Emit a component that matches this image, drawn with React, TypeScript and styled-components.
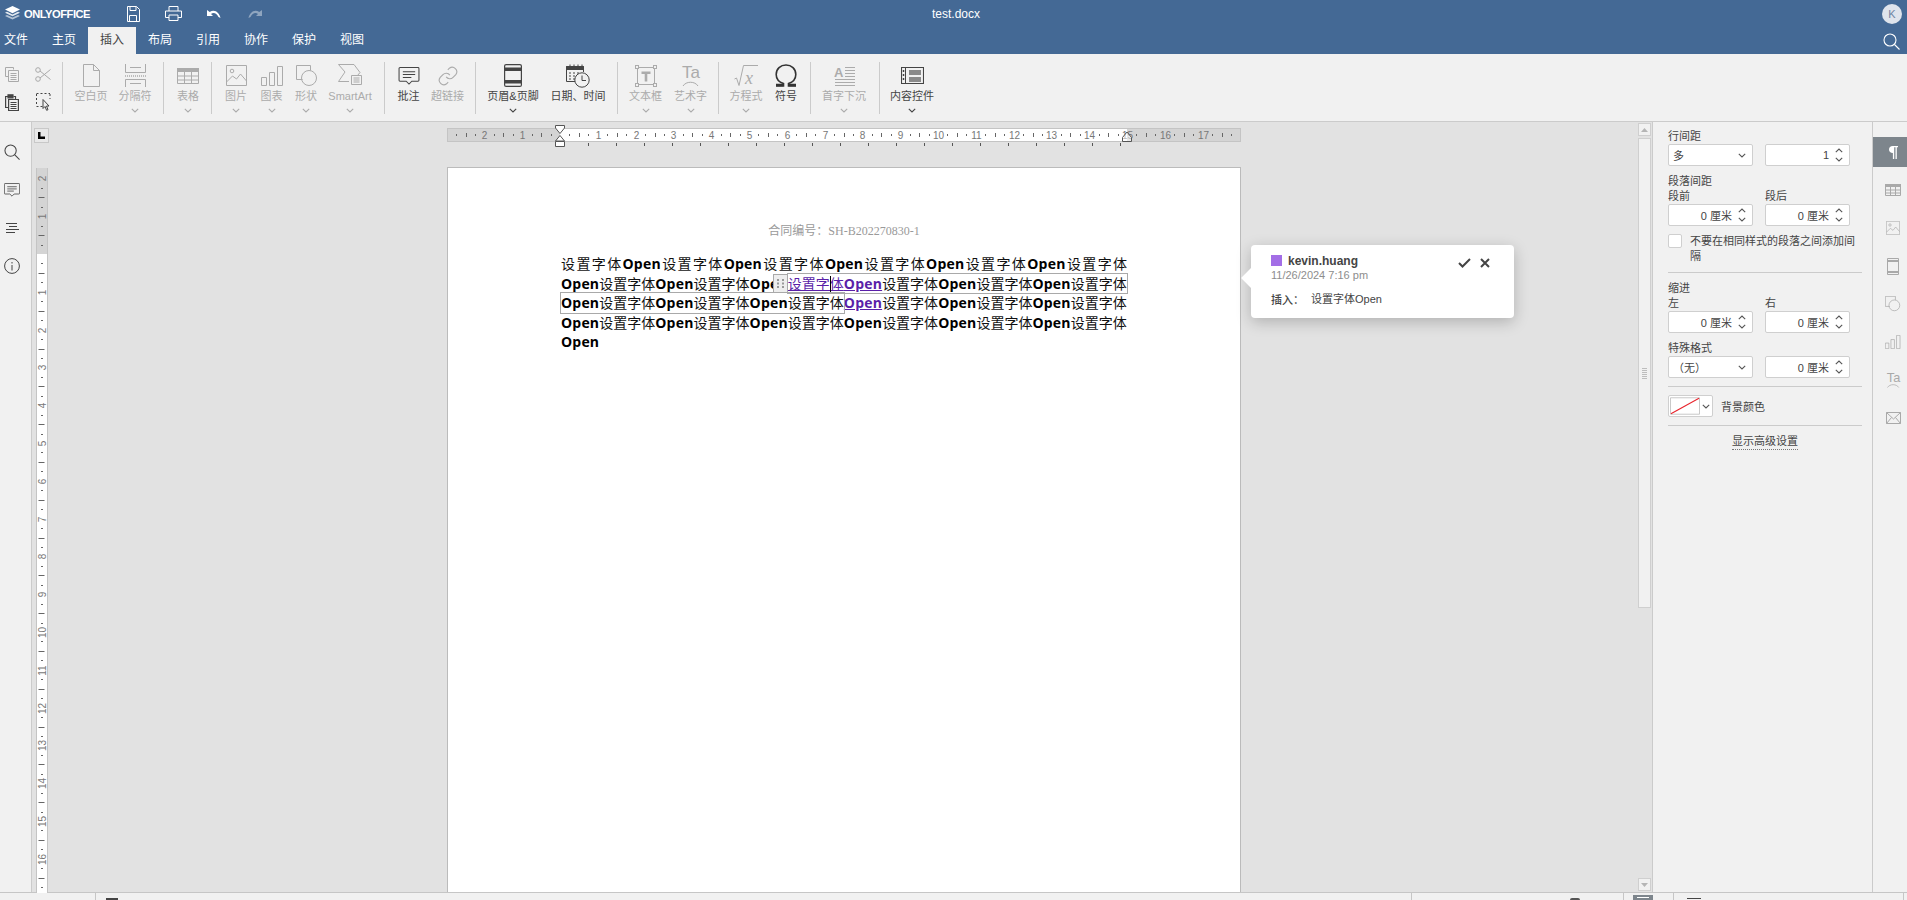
import React from 'react'
import styled, { createGlobalStyle } from 'styled-components'

const GlobalStyle = createGlobalStyle`
  html, body { margin: 0; padding: 0; height: 100%; overflow: hidden; }
  body { font-family: "Liberation Sans", "Noto Sans CJK SC", sans-serif; color: #444; background: #f1f1f1; }
  * { box-sizing: border-box; }
`

const Shell = styled.div`
  display: flex;
  flex-direction: column;
  width: 1907px;
  height: 900px;
  overflow: hidden;
`

/* header */
const Header = styled.header`
  background: #446995;
  color: #fff;
  height: 54px;
  flex: none;
`
const TitleRow = styled.div`
  display: grid;
  grid-template-columns: 1fr auto 1fr;
  align-items: center;
  height: 27px;
`
const LeftTools = styled.div`
  display: flex;
  align-items: center;
  padding-left: 4px;
`
const Logo = styled.div`
  display: flex;
  align-items: center;
  gap: 3px;
  width: 109px;
  font-size: 11.2px;
  font-weight: 700;
  letter-spacing: -0.5px;
`
const HeadIcon = styled.div<{ $dim?: boolean }>`
  width: 40.500px;
  display: flex;
  justify-content: center;
  opacity: ${p => (p.$dim ? 0.4 : 1)};
`
const DocTitle = styled.div`
  font-size: 12px;
  padding-left: 5px;
`
const RightTools = styled.div`
  display: flex;
  justify-content: flex-end;
  padding-right: 5px;
`
const Avatar = styled.div`
  width: 20px;
  height: 20px;
  border-radius: 50%;
  background: #dfe4ec;
  color: #6f84a3;
  font-size: 11px;
  display: flex;
  align-items: center;
  justify-content: center;
`
const TabRow = styled.div`
  display: flex;
  height: 27px;
  position: relative;
`
const Tab = styled.div<{ $active?: boolean }>`
  width: 48px;
  padding-left: 12px;
  font-size: 12px;
  line-height: 27px;
  background: ${p => (p.$active ? '#f1f1f1' : 'transparent')};
  color: ${p => (p.$active ? '#444' : '#fff')};
  &:first-child { width: 40px; padding-left: 4px; }
`
const TabSearch = styled.div`
  margin-left: auto;
  padding: 6px 7px 0 0;
`

/* toolbar */
const Toolbar = styled.div`
  display: flex;
  align-items: flex-start;
  flex: none;
  height: 68px;
  padding-top: 8px;
  background: #f1f1f1;
  border-bottom: 1px solid #cbcbcb;
`
const EditGrid = styled.div`
  display: grid;
  width: 62px;
  grid-template-columns: 24px 38px;
  grid-template-rows: 24px 24px;
  row-gap: 4px;
`
const SmallBtn = styled.div<{ $off?: boolean }>`
  display: flex;
  align-items: center;
  justify-content: center;
  color: ${p => (p.$off ? '#a9a9a9' : '#444')};
`
const Sep = styled.div`
  width: 1px;
  height: 52px;
  background: #cbcbcb;
  flex: none;
`
const Group = styled.div<{ $w: number; $pl: number }>`
  display: flex;
  flex: none;
  width: ${p => p.$w}px;
  padding-left: ${p => p.$pl}px;
`
const BigBtn = styled.div<{ $w: number; $off?: boolean }>`
  display: flex;
  flex-direction: column;
  align-items: center;
  flex: none;
  width: ${p => p.$w}px;
  color: ${p => (p.$off ? '#ababab' : '#444')};
`
const BigIcon = styled.div`
  height: 27px;
  display: flex;
  align-items: center;
  justify-content: center;
`
const BigLabel = styled.div`
  height: 14px;
  font-size: 11px;
  line-height: 14px;
  white-space: nowrap;
`
const BigChev = styled.div`
  height: 10px;
  margin-top: 2px;
  display: flex;
  align-items: center;
`

/* main */
const Main = styled.div`
  display: flex;
  flex: 1;
  min-height: 0;
`
const LeftRail = styled.aside`
  flex: none;
  width: 32px;
  padding-top: 11px;
  background: #f1f1f1;
  border-right: 1px solid #cbcbcb;
`
const RailBtn = styled.div`
  width: 24px;
  height: 38px;
  display: flex;
  align-items: center;
  justify-content: center;
  color: #444;
`
const Workspace = styled.div`
  flex: 1;
  min-width: 0;
  display: flex;
  flex-direction: column;
  position: relative;
  background: #e2e2e2;
`
const RulerRow = styled.div`
  display: flex;
  flex: none;
  height: 45px;
  padding: 6px 0 0 2px;
`
const TabBox = styled.div`
  flex: none;
  width: 15px;
  height: 15px;
  margin-right: 398px;
  border: 1px solid #c8c8c8;
  background: #e8e8e8;
  display: flex;
  align-items: center;
  justify-content: center;
`
const SheetRow = styled.div`
  display: flex;
  flex: 1;
  min-height: 0;
  padding-left: 4px;
`
const VRuler = styled.div`
  flex: none;
  width: 11px;
  margin-top: 1px;
  margin-right: 400px;
`
const Page = styled.div`
  flex: none;
  width: 794px;
  background: #fff;
  border: 1px solid #bbb;
  border-bottom: none;
  padding: 55px 0 0 113px;
  overflow: hidden;
`
const DocHeader = styled.div`
  width: 792px;
  margin: 0 0 15.4px -113px;
  height: 16px;
  line-height: 16px;
  text-align: center;
  font-size: 12px;
  color: #9a9a9a;
  font-family: "Liberation Serif", "Noto Sans CJK SC", serif;
`
const Line = styled.div<{ $justify?: boolean }>`
  width: 566px;
  height: 19.4px;
  line-height: 19.4px;
  font-size: 14px;
  color: #111;
  white-space: nowrap;
  font-family: "Noto Sans CJK SC", sans-serif;
  text-align: ${p => (p.$justify ? 'justify' : 'left')};
  text-align-last: ${p => (p.$justify ? 'justify' : 'left')};
  ${p => (p.$justify ? 'white-space: normal;' : '')}
`
const Latin = styled.span`
  font-family: "Open Sans", sans-serif;
  font-weight: 700;
  letter-spacing: 0.2px;
  color: #000;
`
const Inserted = styled.span`
  color: #5a1fa8;
  text-decoration: underline;
  & > span { color: #5a1fa8; }
`
const Control = styled.span`
  display: inline-block;
  position: relative;
  height: 19.4px;
  outline: 1px solid #a9a9a9;
  outline-offset: -0.5px;
  vertical-align: top;
`
const Handle = styled.span`
  position: absolute;
  left: -15px;
  top: 0;
  width: 15px;
  height: 100%;
  background: #eee;
  border: 1px solid #a9a9a9;
  display: flex;
  align-items: center;
  justify-content: center;
`
const Caret = styled.span`
  position: absolute;
  left: 42px;
  top: 2px;
  width: 1.500px;
  height: 17px;
  background: #000;
`
const ScrollBar = styled.div`
  flex: none;
  width: 14px;
  background: #e2e2e2;
  display: flex;
  flex-direction: column;
  padding: 1px 1px 1px 0;
  gap: 2px;
`
const ScrollBtn = styled.div`
  flex: none;
  height: 13px;
  background: #f1f1f1;
  border: 1px solid #cfcfcf;
  display: flex;
  align-items: center;
  justify-content: center;
`
const ScrollThumb = styled.div`
  height: 470px;
  flex: none;
  background: #f1f1f1;
  border: 1px solid #cfcfcf;
  display: flex;
  align-items: center;
  justify-content: center;
`
const ScrollTrack = styled.div`
  flex: 1;
`

/* comment popover */
const Popover = styled.div`
  position: absolute;
  left: 1219px;
  top: 123px;
  width: 263px;
  height: 73px;
  background: #fff;
  border-radius: 4px;
  box-shadow: 0 4px 15px rgba(0, 0, 0, 0.22);
  padding: 8px 20px;
  &::before {
    content: '';
    position: absolute;
    left: -7px;
    top: 26px;
    width: 14px;
    height: 14px;
    background: #fff;
    transform: rotate(45deg);
  }
`
const PopHead = styled.div`
  display: flex;
  align-items: center;
  position: relative;
  height: 15px;
`
const Swatch = styled.span`
  width: 11px;
  height: 11px;
  background: #a36ee6;
  margin-right: 6px;
`
const PopName = styled.span`
  font-size: 12px;
  font-weight: 700;
  color: #444;
`
const PopActions = styled.div`
  margin-left: auto;
  display: flex;
  align-items: center;
  gap: 9px;
  padding: 5px 4px 0 0;
`
const PopDate = styled.div`
  font-size: 11px;
  line-height: 15px;
  color: #8d8d8d;
`
const PopBody = styled.div`
  display: flex;
  margin-top: 9px;
  font-size: 11px;
  line-height: 15px;
  color: #444;
`
const PopType = styled.span`
  font-weight: 500;
  width: 40px;
  font-family: "Noto Sans CJK SC", sans-serif;
`

/* settings panel */
const Panel = styled.aside`
  flex: none;
  width: 221px;
  padding: 7px 10px 0 15px;
  background: #f1f1f1;
  border-left: 1px solid #cbcbcb;
  border-right: 1px solid #cbcbcb;
  font-size: 11px;
`
const Caption = styled.div<{ $mt?: number }>`
  height: 14px;
  line-height: 14px;
  margin-top: ${p => p.$mt ?? 0}px;
  margin-bottom: 1px;
  white-space: nowrap;
`
const Pair = styled.div`
  display: grid;
  grid-template-columns: 85px 85px;
  column-gap: 12px;
`
const Field = styled.div`
  height: 22px;
  display: flex;
  align-items: center;
  background: #fff;
  border: 1px solid #cfcfcf;
  border-radius: 2px;
`
const FieldValue = styled.div<{ $left?: boolean }>`
  flex: 1;
  text-align: ${p => (p.$left ? 'left' : 'right')};
  padding-left: ${p => (p.$left ? '4px' : '0')};
  white-space: nowrap;
`
const Spin = styled.div`
  flex: none;
  width: 20px;
  display: flex;
  flex-direction: column;
  align-items: center;
  gap: 4px;
`
const SelectArrow = styled.div<{ $w?: number }>`
  flex: none;
  width: ${p => p.$w ?? 20}px;
  display: flex;
  justify-content: center;
`
const CheckRow = styled.div`
  display: flex;
  margin-top: 8px;
`
const CheckBox = styled.div`
  flex: none;
  width: 14px;
  height: 14px;
  margin-right: 8px;
  background: #fff;
  border: 1px solid #cfcfcf;
  border-radius: 2px;
`
const CheckText = styled.div`
  width: 172px;
  line-height: 15px;
`
const Rule = styled.div`
  height: 1px;
  margin-top: 8px;
  background: #cbcbcb;
`
const ColorRow = styled.div`
  display: flex;
  align-items: center;
  margin-top: 8px;
`
const ColorBtn = styled.div`
  width: 45px;
  height: 22px;
  margin-right: 8px;
  display: flex;
  align-items: center;
  background: #fff;
  border: 1px solid #cfcfcf;
  border-radius: 2px;
  padding-left: 1px;
`
const AdvLink = styled.div`
  width: max-content;
  margin: 8px auto 0;
  height: 16px;
  line-height: 14px;
  border-bottom: 1px dotted #777;
`
const RightRail = styled.aside`
  flex: none;
  width: 34px;
  padding-top: 15px;
  background: #f1f1f1;
`
const RightBtn = styled.div<{ $active?: boolean }>`
  height: 30px;
  margin-bottom: 8px;
  padding-left: 6px;
  display: flex;
  align-items: center;
  justify-content: center;
  background: ${p => (p.$active ? '#7d858c' : 'transparent')};
  color: ${p => (p.$active ? '#fff' : '#a9a9a9')};
`

/* status bar */
const StatusBar = styled.footer`
  flex: none;
  height: 8px;
  display: flex;
  background: #f1f1f1;
  border-top: 1px solid #c6c6c6;
  overflow: hidden;
`
const StatusCell = styled.div<{ $w: number }>`
  flex: none;
  position: relative;
  width: ${p => p.$w}px;
  border-right: 1px solid #c6c6c6;
`
const StatusMark = styled.div<{ $l: number; $w: number; $t: number; $h: number; $bg: string; $r?: number }>`
  position: absolute;
  left: ${p => p.$l}px;
  top: ${p => p.$t}px;
  width: ${p => p.$w}px;
  height: ${p => p.$h}px;
  background: ${p => p.$bg};
  border-radius: ${p => p.$r ?? 0}px;
`

/* icons */
const Chev = ({ up, c = 'currentColor' }: { up?: boolean; c?: string }) => (
  <svg width="8" height="5" viewBox="0 0 8 5" fill="none" stroke={c} strokeWidth="1.100">
    <path d={up ? 'M.8 4.200 4 1l3.200 3.200' : 'M.8 .8 4 4l3.200-3.200'} />
  </svg>
)
const S = ({ w, h, children }: { w: number; h: number; children: React.ReactNode }) => (
  <svg width={w} height={h} viewBox={`0 0 ${w} ${h}`} fill="none" stroke="currentColor" strokeWidth="1">
    {children}
  </svg>
)
const StackLogo = () => (
  <svg width="17" height="17" viewBox="0 0 17 17" fill="#fff">
    <path d="M8.500 1 16 4.600 8.500 8.200 1 4.600z" />
    <path opacity=".85" d="M3 6.800 8.500 9.400 14 6.800l2 1-7.500 3.500L1 7.800z" />
    <path opacity=".6" d="M3 10l5.500 2.600L14 10l2 1-7.500 3.600L1 11z" />
  </svg>
)
const Save = () => (
  <S w={14} h={16}>
    <path d="M1.500 .5h9l3 3v12h-12z" />
    <path d="M4 .5v4h6v-4M3.500 15.500V9.500h7v6" />
  </S>
)
const Print = () => (
  <S w={17} h={15}>
    <path d="M4 5V.5h9V5M4 11.500H.5V5h16v6.500H13" />
    <path d="M4 9h9v5.500H4z" />
  </S>
)
const Undo = ({ flip }: { flip?: boolean }) => (
  <svg width="14" height="10" viewBox="0 0 14 10" fill="#fff" style={flip ? { transform: 'scaleX(-1)' } : undefined}>
    <path d="M0 1v6h6L4 5c2-1.800 5.500-1.500 7.500 3l2 1C12.500 3.500 7.500-.5 2.700 3z" />
  </svg>
)
const Search = ({ s = 17 }: { s?: number }) => (
  <svg width={s} height={s} viewBox="0 0 17 17" fill="none" stroke="currentColor" strokeWidth="1.100">
    <circle cx="7" cy="7" r="6" />
    <path d="m11.500 11.500 5 5" />
  </svg>
)
const Copy = () => (
  <S w={14} h={15}>
    <path d="M.5.5h8v2M.5.5v9h3" />
    <path d="M3.500 3.500h10v11h-10zM5.500 6.500h6M5.500 8.500h6M5.500 10.500h6M5.500 12.500h6" />
  </S>
)
const Cut = () => (
  <S w={16} h={15}>
    <circle cx="3" cy="3" r="2.300" />
    <circle cx="3" cy="12" r="2.300" />
    <path d="M5 4 15.500 12.500M5 11 15.500 2.500" />
  </S>
)
const Paste = () => (
  <svg width="14" height="17" viewBox="0 0 14 17" fill="none" stroke="currentColor" strokeWidth="1.200">
    <path d="M3 2.500H.6v11h2.500" />
    <path d="M8.500 2.500h2v2.500" />
    <path d="M3 .8h5v3H3z" fill="currentColor" />
    <path d="M3.600 5.500h9.800v11H3.600zM5.500 8.500h6M5.500 10.500h6M5.500 12.500h6M5.500 14.500h6" />
  </svg>
)
const SelectAll = () => (
  <svg width="15" height="18" viewBox="0 0 15 18" fill="none" stroke="currentColor" strokeWidth="1">
    <path d="M.5 1v12M14 1v5M.5.500h13.500M.5 13.500h6" strokeDasharray="2 2" />
    <path d="M7 6.500v9l2-2 1.600 3.800 1.400-.6L10.500 13H13z" fill="#f1f1f1" />
  </svg>
)
const Blank = () => (
  <S w={17} h={23}>
    <path d="M.5.5h10l6 6v16H.5zM10.500.5v6h6" />
  </S>
)
const Breaks = () => (
  <S w={21} h={23}>
    <path d="M.5 0v8.500h20V0M5 3.500h11" />
    <path d="M0 12h21" strokeDasharray="1 1" strokeWidth="1.500" />
    <path d="M.5 23v-7.500h20V23M5 19.500h11" />
  </S>
)
const TableIco = () => (
  <svg width="22" height="16" viewBox="0 0 22 16" fill="none" stroke="currentColor">
    <path d="M0 0h22v4H0z" fill="currentColor" stroke="none" />
    <path d="M.5.500h21v15H.5zM.5 8h21M.5 12h21M7.500 4v12M14.500 4v12" />
  </svg>
)
const Picture = ({ s = 21 }: { s?: number }) => (
  <svg width={s} height={s} viewBox="0 0 21 21" fill="none" stroke="currentColor">
    <path d="M.5.500h20v20H.5z" />
    <circle cx="6" cy="6" r="1.800" />
    <path d="m.5 17 6-6 4 3 4-5 6 7" />
  </svg>
)
const Chart = ({ sc = 1 }: { sc?: number }) => (
  <svg width={22 * sc} height={20 * sc} viewBox="0 0 22 20" fill="none" stroke="currentColor">
    <path d="M.5 11.500h5v8h-5zM8.500 6.500h5v13h-5zM16.500.5h5v19h-5z" />
  </svg>
)
const Shape = ({ sc = 1 }: { sc?: number }) => (
  <svg width={21 * sc} height={21 * sc} viewBox="0 0 21 21" fill="none" stroke="currentColor">
    <path d="M6.500 14.500H.5V.5h14v5" />
    <circle cx="13" cy="13" r="7.500" />
  </svg>
)
const SmartArt = () => (
  <S w={24} h={23}>
    <path d="M11 .5H.5L7 8 .5 17.500H11" />
    <path d="M11 .5h5l6 8-2.500 3" />
    <path d="M13.500 11.500h10v9h-10zM15.500 14h6M15.500 16h6M15.500 18h6" />
  </S>
)
const CommentIco = ({ w = 22, h = 18 }: { w?: number; h?: number }) => (
  <svg width={w} height={h} viewBox="0 0 22 19" fill="none" stroke="currentColor" strokeWidth="1.100">
    <path d="M1.500.6h19a1 1 0 0 1 1 1V14a1 1 0 0 1-1 1H14l-3 3-3-3H1.500a1 1 0 0 1-1-1V1.600a1 1 0 0 1 1-1z" />
    <path d="M4.500 5h13M4.500 8h13M4.500 11h9" />
  </svg>
)
const Link = () => (
  <svg width="22" height="22" viewBox="0 0 24 24" fill="none" stroke="currentColor" strokeWidth="1.200">
    <path d="M10 13a5 5 0 0 0 7.500.5l3-3a5 5 0 0 0-7-7l-1.700 1.700" />
    <path d="M14 11a5 5 0 0 0-7.500-.5l-3 3a5 5 0 0 0 7 7l1.700-1.700" />
  </svg>
)
const HeaderFooter = () => (
  <svg width="18" height="23" viewBox="0 0 18 23" fill="none" stroke="currentColor">
    <rect x=".6" y=".6" width="16.800" height="21.800" rx="1.500" strokeWidth="1.200" />
    <path d="M1 3.500h16V7H1zM1 16h16v3.500H1z" fill="currentColor" stroke="none" />
  </svg>
)
const DateIco = () => (
  <svg width="24" height="24" viewBox="0 0 24 24" fill="none" stroke="currentColor">
    <path d="M9 17.500H.5v-15h17V8" />
    <path d="M.5 2.500h17v3H.5z" fill="currentColor" />
    <path d="M4 .5v3M8 .5v3M12 .5v3M16 .5v3M3 9h2M7 9h2M11 9h2M3 12h2M7 12h2M3 15h2M7 15h2" />
    <circle cx="16" cy="16" r="7.200" fill="#f1f1f1" />
    <path d="M16 11.500V16.500h4" />
  </svg>
)
const TextBox = () => (
  <svg width="22" height="22" viewBox="0 0 22 22" fill="none" stroke="currentColor">
    <path d="M2.500 2.500h17v17h-17z" />
    <rect x=".5" y=".5" width="3" height="3" fill="#f1f1f1" />
    <rect x="18.500" y=".5" width="3" height="3" fill="#f1f1f1" />
    <rect x=".5" y="18.500" width="3" height="3" fill="#f1f1f1" />
    <rect x="18.500" y="18.500" width="3" height="3" fill="#f1f1f1" />
    <path d="M6.500 6.500h9v2.500h-3.200v7.500h-2.600V9H6.500z" fill="currentColor" stroke="none" />
  </svg>
)
const ArtText = ({ sc = 1 }: { sc?: number }) => (
  <svg width={20 * sc} height={23 * sc} viewBox="0 0 20 23" fill="none" stroke="currentColor">
    <text x="1" y="14" fontSize="17" fill="currentColor" stroke="none" fontFamily="Liberation Sans">Ta</text>
    <path d="M2 22c3-5 12-5 15 0" />
  </svg>
)
const Equation = () => (
  <svg width="24" height="22" viewBox="0 0 24 22" fill="none" stroke="currentColor">
    <path d="M.5 14l2-1 2.500 7.500L9.500.5H24" />
    <text x="11" y="19" fontSize="18" fontStyle="italic" fontFamily="Liberation Serif" fill="currentColor" stroke="none">x</text>
  </svg>
)
const Omega = () => (
  <svg width="22" height="23" viewBox="0 0 22 23" fill="none" stroke="#333">
    <path d="M1 22h7.500v-2.500C4 18 1.200 14.500 1.200 10.500 1.200 5 5.500 1 11 1s9.800 4 9.800 9.500c0 4-2.800 7.500-7.300 9V22H21" strokeWidth="1.600" />
    <path d="M1 21h7M14 21h7" strokeWidth="2.600" />
  </svg>
)
const DropCap = () => (
  <svg width="21" height="20" viewBox="0 0 21 20" fill="none" stroke="currentColor">
    <text x="0" y="11" fontSize="13" fontWeight="700" fill="currentColor" stroke="none" fontFamily="Liberation Sans">A</text>
    <path d="M11 1.500h10M11 4.500h10M11 7.500h10M11 10.500h10M1 13.500h20M1 16.500h20M1 19.500h20" />
  </svg>
)
const ContentCtl = () => (
  <svg width="23" height="19" viewBox="0 0 23 19" fill="none" stroke="currentColor">
    <path d="M.5 1.500h22v16H.5z" strokeWidth="1.100" />
    <path d="M4.500 1.500v16" />
    <path d="M2.500 4v2M2.500 8v2M2.500 12v2" strokeWidth="1.500" />
    <path d="M8 4h12v5H8zM8 11h12v5H8z" fill="#8a8a8a" stroke="none" />
  </svg>
)
const Nav = () => (
  <S w={13} h={10}>
    <path d="M0 .5h11M3 3.500h8M0 6.500h13M0 9.500h9" />
  </S>
)
const Info = () => (
  <svg width="16" height="16" viewBox="0 0 16 16" fill="none" stroke="currentColor">
    <circle cx="8" cy="8" r="7.400" />
    <path d="M8 4v1.500M8 7v5.500" />
  </svg>
)
const RightHF = () => (
  <svg width="12" height="17" viewBox="0 0 12 17" fill="none" stroke="currentColor">
    <path d="M.5.500h11v16H.5z" />
    <path d="M1 2h10v2H1zM1 13h10v2H1z" fill="currentColor" stroke="none" />
  </svg>
)
const Mail = () => (
  <svg width="15" height="12" viewBox="0 0 15 12" fill="none" stroke="currentColor">
    <path d="M.5.500h14v11H.5zM.5.500 7.500 7l7-6.500M.5 11.500 5.500 5.500M14.500 11.500l-5-6" />
  </svg>
)
const RightTable = () => (
  <svg width="16" height="12" viewBox="0 0 16 12" fill="none" stroke="currentColor">
    <path d="M.5.500h15v11H.5z" />
    <path d="M0 0h16v3H0z" fill="currentColor" stroke="none" />
    <path d="M.5 6h15M.5 9h15M5.500 3v9M10.500 3v9" />
  </svg>
)
const Pilcrow = () => (
  <svg width="9" height="13" viewBox="0 0 9 13" fill="currentColor">
    <path d="M3.500 0H9v1.300H7.800V13H6.500V1.300H5.200V13H3.900V7C1.500 7 0 5.500 0 3.500S1.500 0 3.500 0z" />
  </svg>
)
const Grip = () => (
  <svg width="7" height="9" viewBox="0 0 7 9" fill="#999">
    {[0, 3.5, 7].map(y => [0, 5].map(x => <rect key={`${x}-${y}`} x={x} y={y} width="2" height="2" />))}
  </svg>
)
const ScrollArrow = ({ up }: { up?: boolean }) => (
  <svg width="7" height="4" viewBox="0 0 7 4" fill="#b5b5b5">
    <path d={up ? 'M3.500 0 7 4H0z' : 'M0 0h7L3.500 4z'} />
  </svg>
)
const ThumbGrip = () => (
  <svg width="5" height="11" viewBox="0 0 5 11" fill="#bdbdbd">
    {[0, 2, 4, 6, 8, 10].map(y => <rect key={y} y={y} width="5" height="1" />)}
  </svg>
)
const NoFill = () => (
  <svg width="31" height="18" viewBox="0 0 31 18" fill="#fff" stroke="#c6c6c6">
    <path d="M.5.500h30v17H.5z" />
    <path d="M1 17 30 1" stroke="#e8242c" strokeWidth="1.100" />
  </svg>
)
const Check = () => (
  <svg width="13" height="10" viewBox="0 0 13 10" fill="none" stroke="#444" strokeWidth="2">
    <path d="m1 5 3.500 3.500L12 1" />
  </svg>
)
const Close = () => (
  <svg width="10" height="10" viewBox="0 0 10 10" fill="none" stroke="#444" strokeWidth="2">
    <path d="m1 1 8 8M9 1 1 9" />
  </svg>
)

/* rulers are measuring drawings, so ticks and digits live in svg */
const CM = 37.8
const ticks = (from: number, to: number) => {
  const out: number[] = []
  for (let i = Math.ceil(from * 4); i <= to * 4; i++) out.push(i)
  return out
}

const HorizontalRuler = () => (
  <svg width="794" height="20" viewBox="0 0 794 20" style={{ overflow: 'visible', display: 'block', flex: 'none' }}>
    <rect x=".5" y=".5" width="793" height="13" fill="#d4d4d4" stroke="#c4c4c4" />
    <rect x="113" y="1" width="567" height="12" fill="#fff" />
    {ticks(-2.9, 17.9).map(i => {
      const x = Math.round(113 + (i / 4) * CM) + 0.5
      if (i === 0) return null
      if (i % 4 === 0) {
        return (
          <text key={i} x={x} y="11" textAnchor="middle" fontSize="10" fill="#777" fontFamily="Liberation Sans">
            {Math.abs(i / 4)}
          </text>
        )
      }
      const long = Math.abs(i % 4) === 2
      return <line key={i} x1={x} x2={x} y1={long ? 5 : 6} y2={long ? 9 : 8} stroke="#666" />
    })}
    {Array.from({ length: 20 }, (_, i) => {
      const x = 113 + 28 * (i + 1) + 0.5
      return <line key={i} x1={x} x2={x} y1="15" y2="18" stroke="#555" />
    })}
    <path d="M108.500-2.500h9v2.500l-4.500 5.500-4.500-5.500zM108.500 13l4.500-5.500 4.500 5.500zM108.500 13.500h9v5h-9z" fill="#fff" stroke="#555" />
    <path d="M675.500 13.500v-4l4.500-5.500 4.500 5.500v4z" fill="#fff" fillOpacity=".5" stroke="#555" />
  </svg>
)

const VerticalRuler = () => (
  <svg width="12" height="725" viewBox="0 0 12 725" style={{ display: 'block' }}>
    <rect x=".5" y="0" width="11" height="725" fill="#fff" />
    <rect x=".5" y="0" width="11" height="86" fill="#d4d4d4" />
    <path d="M.5 0v725M11.500 0v725" stroke="#c4c4c4" />
    {ticks(-2, 16.9).map(i => {
      const y = Math.round(86 + (i / 4) * CM) + 0.5
      if (i === 0) return null
      if (i % 4 === 0) {
        return (
          <text
            key={i}
            x="6"
            y={y}
            transform={`rotate(-90 6 ${y})`}
            dy="3.500"
            textAnchor="middle"
            fontSize="10"
            fill="#777"
            fontFamily="Liberation Sans"
          >
            {Math.abs(i / 4)}
          </text>
        )
      }
      const long = Math.abs(i % 4) === 2
      return <line key={i} x1={long ? 2.5 : 5} x2={long ? 8.5 : 7} y1={y} y2={y} stroke="#666" />
    })}
  </svg>
)

const Unit = ({ value = '0 厘米' }: { value?: string }) => (
  <Field>
    <FieldValue>{value}</FieldValue>
    <Spin>
      <Chev up c="#555" />
      <Chev c="#555" />
    </Spin>
  </Field>
)

const Select = ({ value }: { value: string }) => (
  <Field>
    <FieldValue $left>{value}</FieldValue>
    <SelectArrow>
      <Chev c="#555" />
    </SelectArrow>
  </Field>
)

const Big = ({ w, label, off, menu, children }: { w: number; label: string; off?: boolean; menu?: boolean; children: React.ReactNode }) => (
  <BigBtn $w={w} $off={off}>
    <BigIcon>{children}</BigIcon>
    <BigLabel>{label}</BigLabel>
    {menu && (
      <BigChev>
        <Chev />
      </BigChev>
    )}
  </BigBtn>
)

const tabs = ['文件', '主页', '插入', '布局', '引用', '协作', '保护', '视图']
const CJK = '设置字体'

export default function App() {
  return (
    <Shell>
      <GlobalStyle />
      <Header>
        <TitleRow>
          <LeftTools>
            <Logo>
              <StackLogo />
              ONLYOFFICE
            </Logo>
            <HeadIcon><Save /></HeadIcon>
            <HeadIcon><Print /></HeadIcon>
            <HeadIcon><Undo /></HeadIcon>
            <HeadIcon $dim><Undo flip /></HeadIcon>
          </LeftTools>
          <DocTitle>test.docx</DocTitle>
          <RightTools>
            <Avatar>K</Avatar>
          </RightTools>
        </TitleRow>
        <TabRow>
          {tabs.map(t => (
            <Tab key={t} $active={t === '插入'}>{t}</Tab>
          ))}
          <TabSearch><Search /></TabSearch>
        </TabRow>
      </Header>

      <Toolbar>
        <EditGrid>
          <SmallBtn $off><Copy /></SmallBtn>
          <SmallBtn $off><Cut /></SmallBtn>
          <SmallBtn><Paste /></SmallBtn>
          <SmallBtn><SelectAll /></SmallBtn>
        </EditGrid>
        <Sep />
        <Group $w={100} $pl={6}>
          <Big w={44} label="空白页" off><Blank /></Big>
          <Big w={44} label="分隔符" off menu><Breaks /></Big>
        </Group>
        <Sep />
        <Group $w={47} $pl={5}>
          <Big w={38} label="表格" off menu><TableIco /></Big>
        </Group>
        <Sep />
        <Group $w={172} $pl={5}>
          <Big w={38} label="图片" off menu><Picture /></Big>
          <Big w={33} label="图表" off menu><Chart /></Big>
          <Big w={36} label="形状" off menu><Shape /></Big>
          <Big w={52} label="SmartArt" off menu><SmartArt /></Big>
        </Group>
        <Sep />
        <Group $w={90} $pl={4}>
          <Big w={39} label="批注"><CommentIco /></Big>
          <Big w={39} label="超链接" off><Link /></Big>
        </Group>
        <Sep />
        <Group $w={141} $pl={5}>
          <Big w={64} label="页眉&页脚" menu><HeaderFooter /></Big>
          <Big w={66} label="日期、时间"><DateIco /></Big>
        </Group>
        <Sep />
        <Group $w={100} $pl={5}>
          <Big w={45} label="文本框" off menu><TextBox /></Big>
          <Big w={45} label="艺术字" off menu><ArtText /></Big>
        </Group>
        <Sep />
        <Group $w={91} $pl={5}>
          <Big w={44} label="方程式" off menu><Equation /></Big>
          <Big w={36} label="符号"><Omega /></Big>
        </Group>
        <Sep />
        <Group $w={68} $pl={5}>
          <Big w={56} label="首字下沉" off menu><DropCap /></Big>
        </Group>
        <Sep />
        <Group $w={70} $pl={3}>
          <Big w={58} label="内容控件" menu><ContentCtl /></Big>
        </Group>
      </Toolbar>

      <Main>
        <LeftRail>
          <RailBtn><Search s={16} /></RailBtn>
          <RailBtn><CommentIco w={16} h={14} /></RailBtn>
          <RailBtn><Nav /></RailBtn>
          <RailBtn><Info /></RailBtn>
        </LeftRail>

        <Workspace>
          <RulerRow>
            <TabBox>
              <svg width="7" height="7" viewBox="0 0 7 7" fill="#000"><path d="M0 0h2.500v4.500H7V7H0z" /></svg>
            </TabBox>
            <HorizontalRuler />
          </RulerRow>
          <SheetRow>
            <VRuler><VerticalRuler /></VRuler>
            <Page>
              <DocHeader>合同编号：SH-B202270830-1</DocHeader>
              <Line $justify>
                设置字体<Latin>Open</Latin>设置字体<Latin>Open</Latin>设置字体<Latin>Open</Latin>设置字体<Latin>Open</Latin>设置字体<Latin>Open</Latin>设置字体
              </Line>
              <Line>
                <Latin>Open</Latin>{CJK}<Latin>Open</Latin>{CJK}<Latin>Open</Latin>
                <Control>
                  <Handle><Grip /></Handle>
                  <Inserted>{CJK}<Latin>Open</Latin></Inserted>
                  <Caret />
                  {CJK}<Latin>Open</Latin>{CJK}<Latin>Open</Latin>{CJK}
                </Control>
              </Line>
              <Line>
                <Control>
                  <Latin>Open</Latin>{CJK}<Latin>Open</Latin>{CJK}<Latin>Open</Latin>{CJK}
                </Control>
                <Inserted><Latin>Open</Latin></Inserted>
                {CJK}<Latin>Open</Latin>{CJK}<Latin>Open</Latin>{CJK}
              </Line>
              <Line>
                <Latin>Open</Latin>{CJK}<Latin>Open</Latin>{CJK}<Latin>Open</Latin>{CJK}<Latin>Open</Latin>{CJK}<Latin>Open</Latin>{CJK}<Latin>Open</Latin>{CJK}
              </Line>
              <Line><Latin>Open</Latin></Line>
            </Page>
          </SheetRow>
          <Popover>
            <PopHead>
              <Swatch />
              <PopName>kevin.huang</PopName>
              <PopActions><Check /><Close /></PopActions>
            </PopHead>
            <PopDate>11/26/2024 7:16 pm</PopDate>
            <PopBody>
              <PopType>插入：</PopType>
              <span>设置字体Open</span>
            </PopBody>
          </Popover>
        </Workspace>

        <ScrollBar>
          <ScrollBtn><ScrollArrow up /></ScrollBtn>
          <ScrollThumb><ThumbGrip /></ScrollThumb>
          <ScrollTrack />
          <ScrollBtn><ScrollArrow /></ScrollBtn>
        </ScrollBar>

        <Panel>
          <Caption>行间距</Caption>
          <Pair>
            <Select value="多" />
            <Unit value="1" />
          </Pair>
          <Caption $mt={8}>段落间距</Caption>
          <Pair>
            <Caption>段前</Caption>
            <Caption>段后</Caption>
            <Unit />
            <Unit />
          </Pair>
          <CheckRow>
            <CheckBox />
            <CheckText>不要在相同样式的段落之间添加间隔</CheckText>
          </CheckRow>
          <Rule />
          <Caption $mt={8}>缩进</Caption>
          <Pair>
            <Caption>左</Caption>
            <Caption>右</Caption>
            <Unit />
            <Unit />
          </Pair>
          <Caption $mt={8}>特殊格式</Caption>
          <Pair>
            <Select value="  （无）" />
            <Unit />
          </Pair>
          <Rule />
          <ColorRow>
            <ColorBtn>
              <NoFill />
              <SelectArrow $w={12}><Chev c="#555" /></SelectArrow>
            </ColorBtn>
            背景颜色
          </ColorRow>
          <Rule />
          <AdvLink>显示高级设置</AdvLink>
        </Panel>

        <RightRail>
          <RightBtn $active><Pilcrow /></RightBtn>
          <RightBtn><RightTable /></RightBtn>
          <RightBtn><Picture s={14} /></RightBtn>
          <RightBtn><RightHF /></RightBtn>
          <RightBtn><Shape sc={0.72} /></RightBtn>
          <RightBtn><Chart sc={0.7} /></RightBtn>
          <RightBtn><ArtText sc={0.75} /></RightBtn>
          <RightBtn><Mail /></RightBtn>
        </RightRail>
      </Main>

      <StatusBar>
        <StatusCell $w={96} />
        <StatusCell $w={1316}>
          <StatusMark $l={10} $w={12} $t={5} $h={2} $bg="#444" />
        </StatusCell>
        <StatusCell $w={212}>
          <StatusMark $l={158} $w={10} $t={5} $h={4} $bg="#555" $r={4} />
        </StatusCell>
        <StatusCell $w={50}>
          <StatusMark $l={9} $w={20} $t={2} $h={6} $bg="#7d858c" />
          <StatusMark $l={13} $w={12} $t={4} $h={1} $bg="#fff" />
        </StatusCell>
        <StatusCell $w={230}>
          <StatusMark $l={13} $w={14} $t={5} $h={1} $bg="#444" />
        </StatusCell>
      </StatusBar>
    </Shell>
  )
}
